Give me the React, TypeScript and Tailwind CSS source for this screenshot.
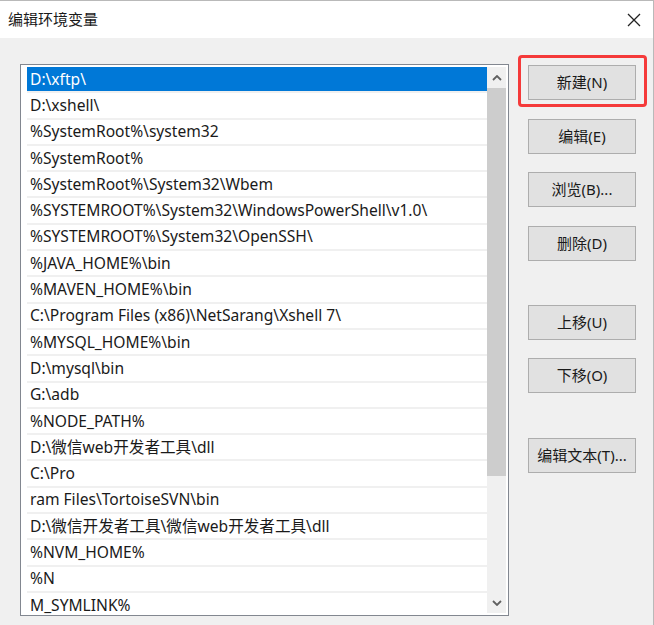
import React from 'react';

const paths = [
  'D:\\xftp\\',
  'D:\\xshell\\',
  '%SystemRoot%\\system32',
  '%SystemRoot%',
  '%SystemRoot%\\System32\\Wbem',
  '%SYSTEMROOT%\\System32\\WindowsPowerShell\\v1.0\\',
  '%SYSTEMROOT%\\System32\\OpenSSH\\',
  '%JAVA_HOME%\\bin',
  '%MAVEN_HOME%\\bin',
  'C:\\Program Files (x86)\\NetSarang\\Xshell 7\\',
  '%MYSQL_HOME%\\bin',
  'D:\\mysql\\bin',
  'G:\\adb',
  '%NODE_PATH%',
  'D:\\微信web开发者工具\\dll',
  'C:\\Pro',
  'ram Files\\TortoiseSVN\\bin',
  'D:\\微信开发者工具\\微信web开发者工具\\dll',
  '%NVM_HOME%',
  '%N',
  'M_SYMLINK%',
];

const font = { fontFamily: '"Noto Sans", "Noto Sans CJK SC", sans-serif' };

function Btn({ label, className = '' }: { label: string; className?: string }) {
  return (
    <button
      type="button"
      className={`h-[35px] w-[108px] border border-[#adadad] bg-[#e1e1e1] text-[15px] text-[#1a1a1a] ${className}`}
    >
      {label}
    </button>
  );
}

function Chevron({ up }: { up?: boolean }) {
  return (
    <svg width="10" height="6" viewBox="0 0 10 6" className={up ? '' : 'rotate-180'}>
      <path d="M1 5 L5 1 L9 5" fill="none" stroke="#606060" strokeWidth="1.8" />
    </svg>
  );
}

export default function App() {
  return (
    <div className="w-[654px] h-[625px] overflow-hidden border-t border-r border-[#b9b9b9] flex flex-col bg-[#f0f0f0]" style={font}>
      <div className="h-[37px] bg-white flex items-center justify-between pl-[8px] pr-[12px] flex-shrink-0">
        <span className="text-[15px] text-[#1a1a1a]">编辑环境变量</span>
        <svg width="14" height="14" viewBox="0 0 14 14">
          <path d="M1 1 L13 13 M13 1 L1 13" stroke="#222" strokeWidth="1.3" />
        </svg>
      </div>

      <div className="flex flex-1">
        <div className="ml-[20px] mt-[26px] w-[489px] h-[552px] border border-[#828790] bg-white flex pl-[6px] pt-[2px] pr-[2px]">
          <div className="flex-1 overflow-hidden">
            {paths.map((p, i) => (
              <div
                key={i}
                className={`h-[26.3px] border-b-[2.3px] border-[#f0f0f0] flex items-center pl-[3px] pb-[1px] text-[15.6px] leading-[18px] whitespace-nowrap ${
                  i === 0 ? 'bg-[#0078d7] text-white' : 'text-[#1a1a1a]'
                }`}
              >
                {p}
              </div>
            ))}
          </div>
          <div className="w-[19px] flex flex-col bg-[#f0f0f0] mb-[2px]">
            <div className="h-[21px] flex items-center justify-center">
              <Chevron up />
            </div>
            <div className="h-[388px] bg-[#cdcdcd]" />
            <div className="flex-1" />
            <div className="h-[21px] flex items-center justify-center">
              <Chevron />
            </div>
          </div>
        </div>

        <div className="ml-[19px] pt-[27px] flex flex-col">
          <div className="relative">
            <div className="absolute -left-[10px] -top-[10px] -right-[11px] -bottom-[7px] border-[3px] border-[#f53a3a] rounded-[4px]" />
            <Btn label="新建(N)" />
          </div>
          <Btn label="编辑(E)" className="mt-[19px]" />
          <Btn label="浏览(B)..." className="mt-[18px]" />
          <Btn label="删除(D)" className="mt-[19px]" />
          <Btn label="上移(U)" className="mt-[44px]" />
          <Btn label="下移(O)" className="mt-[18px]" />
          <Btn label="编辑文本(T)..." className="mt-[45px]" />
        </div>
      </div>
    </div>
  );
}
